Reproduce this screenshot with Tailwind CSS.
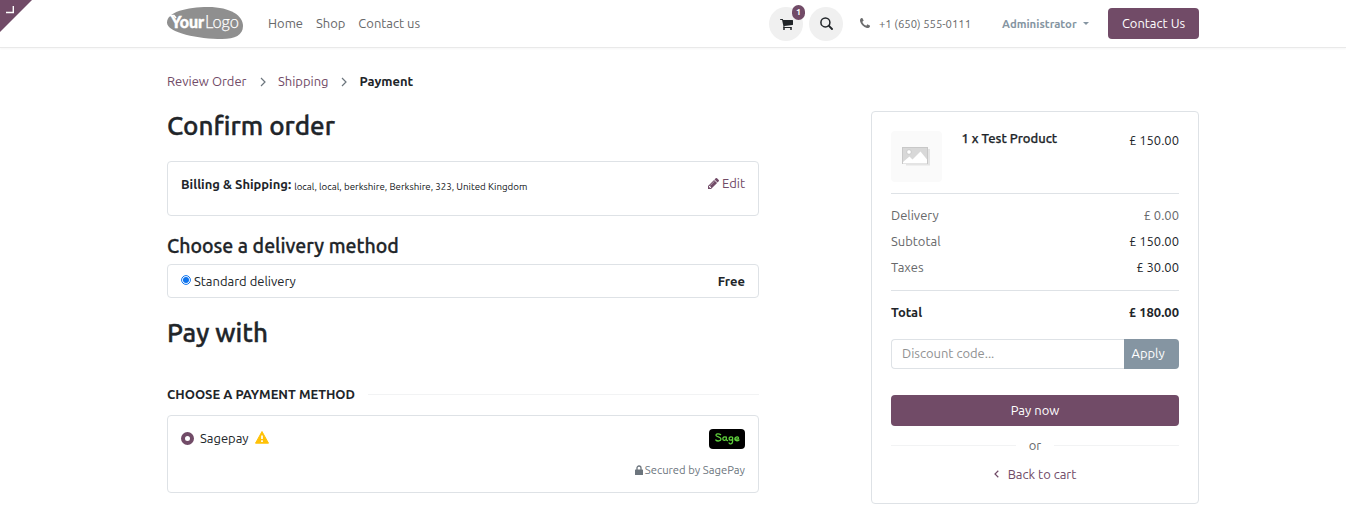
<!DOCTYPE html>
<html lang="en">
<head>
<meta charset="utf-8">
<title>Confirm order</title>
<script src="https://cdn.jsdelivr.net/npm/@tailwindcss/browser@4"></script>
</head>
<body class="relative h-[529px] overflow-hidden bg-white font-['Ubuntu','Noto_Sans',sans-serif] text-[12.970px] leading-5 text-[#212529]">
<header class="h-[48px] border-b border-[#e9e9e9] shadow-[0_1px_2px_rgba(0,0,0,0.04)]">
  <svg class="absolute left-0 top-0" width="32" height="32" viewBox="0 0 32 32"><path d="M0 0H32L0 32Z" fill="#714b67"/><path d="M6 12.500H13.300V6" fill="none" stroke="#fff" stroke-width="1.400"/></svg>
  <div class="ml-[167px] flex h-[47px] w-[1032px] items-center">
    <svg class="mt-[-1px] h-[34px] w-[76px] shrink-0" viewBox="0 0 76 34"><path d="M0 16.500C0 6 20 1 41 1C64 1 76 10 76 20C76 29 68 33 55 33C32 33 0 27 0 16.500Z" fill="#8f8f8f"/><text x="4" y="22" textLength="33" lengthAdjust="spacingAndGlyphs" font-family="Lato,sans-serif" font-weight="900" font-size="16.500" fill="#fff" stroke="#fff" stroke-width=".4">Your</text><path d="M2.500 9.500L7 9.500L9 12" stroke="#fff" stroke-width="1.500" fill="none"/><text x="38" y="22" textLength="34" lengthAdjust="spacingAndGlyphs" font-family="Lato,sans-serif" font-weight="300" font-size="17" fill="#fff" stroke="#fff" stroke-width=".25">Logo</text></svg>
    <nav class="ml-[25px] flex gap-[13px] mt-[-2px] text-[#67686a]"><a>Home</a><a>Shop</a><a>Contact us</a></nav>
    <div class="ml-auto flex items-center">
      <div class="relative flex size-[34px] items-center justify-center rounded-full bg-[#f0f0f0]">
        <svg width="13" height="12" viewBox="0 0 1664 1536" fill="#212529"><path d="M640 1408a128 128 0 1 1-256 0a128 128 0 0 1 256 0zm896 0a128 128 0 1 1-256 0a128 128 0 0 1 256 0zM1664 320v512q0 24-16.500 42.500T1607 896L563 1018q13 60 13 70q0 16-24 64h920q26 0 45 19t19 45t-19 45t-45 19H448q-26 0-45-19t-19-45q0-11 8-31.500t16-36t21.500-40L445 1079L268 256H64q-26 0-45-19T0 192t19-45t45-19h256q16 0 28.500 6.500T368 150t13 24.500t8 26t5.500 29.500t4.500 26h1201q26 0 45 19t19 45z"/></svg>
        <span class="absolute -top-[2px] left-[23px] flex h-[15px] w-[13px] items-center justify-center rounded-full bg-[#714b67] text-[9px] font-bold leading-none text-white">1</span>
      </div>
      <div class="ml-[6px] flex size-[34px] items-center justify-center rounded-full bg-[#f0f0f0]"><svg width="13" height="13" viewBox="0 0 13 13" fill="none" stroke="#212529"><circle cx="5.400" cy="5.400" r="4.500" stroke-width="1.500"/><path d="M8.700 8.700L12 12" stroke-width="1.900" stroke-linecap="round"/></svg></div>
      <svg class="ml-[17px] mt-[-1px]" width="10" height="10" viewBox="0 0 1408 1408" fill="#6c6d6e"><path d="M1408 1112q0 27-10 70.500t-21 68.500q-21 50-122 106q-94 51-186 51q-27 0-53-3.500t-57.500-12.500t-47-14.500T856 1357t-49-18q-98-35-175-83q-127-79-264-216T152 776q-48-77-83-175q-3-9-18-49t-20.500-55.500t-14.500-47T3.500 392T0 339q0-92 51-186Q107 52 157 31q25-11 68.500-21T296 0q14 0 21 3q18 6 53 76q11 19 30 54t35 63.500t31 53.500q3 4 17.500 25t21.500 35.500t7 28.500q0 20-28.500 50t-62 55t-62 53t-28.500 46q0 9 5 22.500t8.500 20.500t14 24t11.500 19q76 137 174 235t235 174q2 1 19 11.500t24 14t20.500 8.500t22.500 5q18 0 46-28.500t53-62t55-62t50-28.500q14 0 28.500 7t35.500 21.500t25 17.500q25 15 53.500 31t63.500 35t54 30q70 35 76 53q3 7 3 21z"/></svg>
      <a class="ml-[9px] w-[91px] whitespace-nowrap text-[11.300px] text-[#67686a]">+1 (650) 555-0111</a>
      <a class="ml-[32px] w-[75px] whitespace-nowrap text-[11.350px] font-bold text-[#8595a2]">Administrator</a>
      <span class="ml-[6px] border-x-[3px] border-t-[3px] border-x-transparent border-t-[#8595a2]"></span>
      <a class="ml-[19px] flex h-[31px] w-[91px] items-center justify-center whitespace-nowrap rounded bg-[#714b67] pb-px text-white">Contact Us</a>
    </div>
  </div>
</header>
<main class="ml-[167px] w-[1032px]">
  <div class="mt-[23px] flex h-[20px] items-center">
    <a class="text-[#714b67]">Review Order</a>
    <svg class="ml-[13px] mt-[2px]" width="6" height="10" viewBox="0 0 6 10" fill="none" stroke="#6c757d" stroke-width="1.200"><path d="M1 1L5 5L1 9"/></svg>
    <a class="ml-[12.500px] text-[#714b67]">Shipping</a>
    <svg class="ml-[12px] mt-[2px]" width="6" height="10" viewBox="0 0 6 10" fill="none" stroke="#6c757d" stroke-width="1.200"><path d="M1 1L5 5L1 9"/></svg>
    <span class="ml-[13px] font-bold">Payment</span>
  </div>
  <div class="flex items-start justify-between">
    <section class="w-[592px]">
      <h1 class="mt-[19px] flex h-[32px] items-center text-[26px] font-medium [-webkit-text-stroke:0.400px_#212529]"><span>Confirm order</span></h1>
      <div class="mt-[19px] flex h-[55px] justify-between rounded border border-[#dee2e6] px-[13px] pt-[12px]">
        <p><b>Billing &amp; Shipping:</b><span class="relative top-[1px] ml-[3px] text-[9.720px] text-[#111417]">local, local, berkshire, Berkshire, 323, United Kingdom</span></p>
        <a class="mt-[-1px] flex h-5 items-center gap-[3px] text-[#714b67]"><svg width="11" height="11" viewBox="0 0 1515 1515" fill="#714b67"><path d="M363 1387l91-91l-235-235l-91 91v107h128v128h107zM886 459q0-22-22-22q-10 0-17 7L305 986q-7 7-7 17q0 22 22 22q10 0 17-7l542-542q7-7 7-17zM832 267l416 416l-832 832H0v-416zM1515 363q0 53-37 90l-166 166l-416-416L1062 38q36-38 90-38q53 0 91 38l235 234q37 39 37 91z"/></svg><span>Edit</span></a>
      </div>
      <h2 class="mt-[18px] flex h-[24px] items-center text-[19.500px] font-medium [-webkit-text-stroke:0.300px_#212529]"><span>Choose a delivery method</span></h2>
      <div class="mt-[6px] flex h-[34px] items-center rounded border border-[#dee2e6] px-[13px]">
        <svg class="mb-[3px]" width="10" height="10" viewBox="0 0 10 10"><circle cx="5" cy="5" r="4.400" fill="#fff" stroke="#0d73ee" stroke-width="1"/><circle cx="5" cy="5" r="3" fill="#0d73ee"/></svg>
        <span class="ml-[3px]">Standard delivery</span><b class="ml-auto">Free</b>
      </div>
      <h1 class="mt-[19px] flex h-[32px] items-center text-[26px] font-medium [-webkit-text-stroke:0.400px_#212529]"><span>Pay with</span></h1>
      <div class="mt-[35px] flex h-[20px] items-center font-bold"><span>CHOOSE A PAYMENT METHOD</span><span class="ml-[13px] h-px flex-1 bg-[#f2f3f4]"></span></div>
      <div class="mt-[11px] h-[78px] rounded border border-[#dee2e6] px-[13px] pt-[12px]">
        <div class="flex h-[20px] items-center"><span class="size-[13px] rounded-full border-4 border-[#714b67] bg-white"></span><span class="ml-[6px]">Sagepay</span>
          <svg class="ml-[6px] mb-[2px]" width="14" height="13" viewBox="0 0 14 13"><path d="M7 .5L13.500 12.200H.5Z" fill="#ffc107" stroke="#ffc107" stroke-linejoin="round"/><path d="M7 4.500V8M7 9.300V11" stroke="#fff" stroke-width="1.700"/></svg>
          <svg class="ml-auto mt-[2px]" width="36" height="20" viewBox="0 0 36 20"><rect width="36" height="20" rx="4"/><g fill="none" stroke="#5fd13d" stroke-width="1.300" stroke-linecap="round" stroke-linejoin="round"><path d="M11.600 5.600C9.500 4.200 6.700 4.700 7 6.400C7.300 8.100 12 7.900 12 10C12 12.300 8.200 12.500 6.800 11"/><path d="M17.300 8.200C15.300 7.200 13.700 8.300 13.800 10C14 12 17.300 11.700 17.300 9.700V8.300V11L18.600 11.600"/><path d="M23.600 8.300C21.600 7.200 19.900 8.400 20.100 9.800C20.400 11.800 23.400 11.500 23.600 9.800V8.300V12.500C23.600 15.100 20.500 15.500 20.100 13.900"/><path d="M26 9.900C28.500 10.600 30.100 9.500 29.300 8.400C28.500 7.200 25.800 8.200 25.800 10C25.800 12 28.600 12.200 30 10.900"/></g></svg></div>
        <div class="mt-[12px] flex h-[20px] items-center justify-end gap-[2px] text-[11.250px] text-[#6c757d]"><svg width="8" height="10" viewBox="0 0 8 10"><path d="M2 5V3A2 2 0 0 1 6 3V5" fill="none" stroke="#6c757d" stroke-width="1.300"/><rect y="4.500" width="8" height="5.500" rx=".6" fill="#6c757d"/></svg><span>Secured by SagePay</span></div>
      </div>
    </section>
    <aside class="mt-[20px] h-[393px] w-[328px] rounded border border-[#dee2e6] px-[19px] pt-[19px]">
      <div class="flex h-[63px] border-b border-[#dee2e6]">
        <svg width="51" height="51" viewBox="0 0 51 51"><rect width="51" height="51" rx="4" fill="#fafafa"/><path d="M13 18H39V34.500H15V33H13Z" fill="#e4e4e4"/><rect x="11.500" y="16.500" width="25" height="16" fill="#d8d8d8" stroke="#c8c8c8"/><path d="M12 32.500V31L18.500 25.500L21.500 28.500L29.500 20.500L36 28.500V32.500Z" fill="#fff"/><circle cx="18" cy="21" r="2.300" fill="#fff" stroke="#c0c0c0" stroke-width=".7"/></svg>
        <span class="ml-[19.500px] mt-[-3px] font-medium [-webkit-text-stroke:0.250px_#212529]">1 x Test Product</span><span class="ml-auto mt-[-1px]">£ 150.00</span>
      </div>
      <div class="mt-[8px] flex h-[26px] items-center justify-between text-[#67686a]"><span>Delivery</span><span>£ 0.00</span></div>
      <div class="flex h-[26px] items-center justify-between"><span class="text-[#67686a]">Subtotal</span><span>£ 150.00</span></div>
      <div class="flex h-[26px] items-center justify-between"><span class="text-[#67686a]">Taxes</span><span>£ 30.00</span></div>
      <div class="mt-[10px] flex h-[44px] items-center justify-between border-t border-[#dee2e6] pb-[2px] font-bold"><span>Total</span><span>£ 180.00</span></div>
      <div class="mt-[5px] flex h-[30px]"><div class="flex flex-1 items-center rounded-l border border-r-0 border-[#dee2e6] pb-[2px] pl-[10px] text-[#909192]"><span>Discount code...</span></div><div class="flex w-[55px] items-center rounded-r bg-[#8595a2] pb-[2px] pl-[7.500px] text-white"><span>Apply</span></div></div>
      <div class="mt-[26px] flex h-[31px] items-center justify-center rounded bg-[#714b67] pb-[2px] text-white"><span>Pay now</span></div>
      <div class="mt-[9px] flex h-[20px] items-center gap-[13px] text-[#67686a]"><i class="h-px flex-1 bg-[#f2f3f4]"></i><span>or</span><i class="h-px flex-1 bg-[#f2f3f4]"></i></div>
      <div class="mt-[9px] flex h-[20px] items-center justify-center gap-[9px] text-[#714b67]"><svg width="5" height="8" viewBox="0 0 5 8" fill="none" stroke="#714b67" stroke-width="1.200"><path d="M4.300 .8L1 4L4.300 7.200"/></svg><span>Back to cart</span></div>
    </aside>
  </div>
</main>
</body>
</html>
